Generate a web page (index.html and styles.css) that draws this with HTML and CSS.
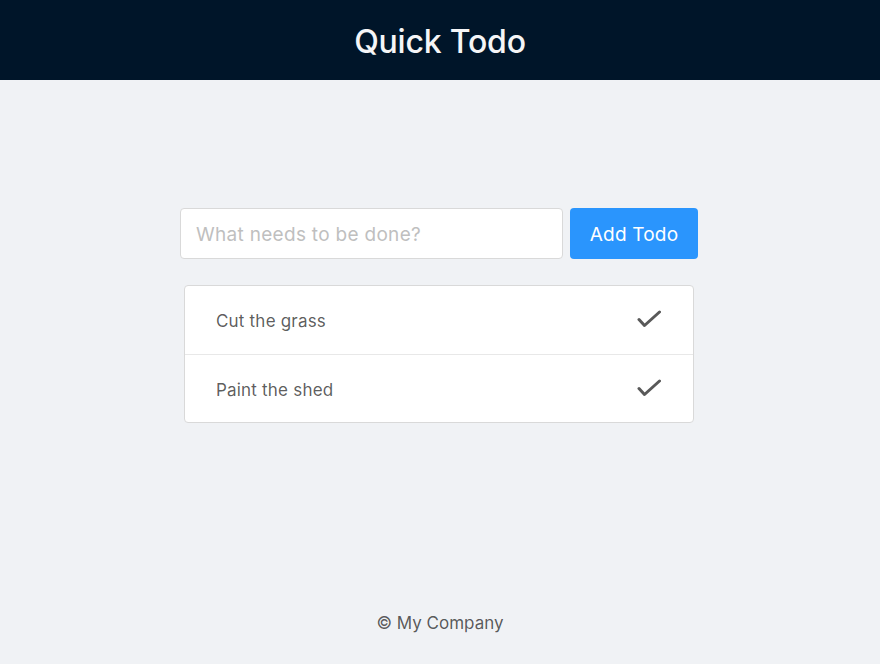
FILE: index.html
```html
<!DOCTYPE html>
<html>
<head>
<meta charset="utf-8">
<link rel="stylesheet" href="styles.css">
</head>
<body>
<div class="layout">
  <header class="header"><h1 class="title">Quick Todo</h1></header>
  <main class="content">
    <div class="add-row">
      <input class="todo-input" type="text" placeholder="What needs to be done?">
      <button class="add-btn">Add Todo</button>
    </div>
    <ul class="todo-list">
      <li class="todo-item">
        <span class="todo-text">Cut the grass</span>
        <svg class="check" width="24" height="20" viewBox="0 0 24 20"><path d="M2 10.5 L7.5 16.5 L22.5 3" fill="none" stroke="#595959" stroke-width="3" stroke-linecap="round" stroke-linejoin="round"/></svg>
      </li>
      <li class="todo-item">
        <span class="todo-text">Paint the shed</span>
        <svg class="check" width="24" height="20" viewBox="0 0 24 20"><path d="M2 10.5 L7.5 16.5 L22.5 3" fill="none" stroke="#595959" stroke-width="3" stroke-linecap="round" stroke-linejoin="round"/></svg>
      </li>
    </ul>
  </main>
  <footer class="footer">© My Company</footer>
</div>
</body>
</html>
```

FILE: styles.css
```css
* { box-sizing: border-box; }
html, body { margin: 0; padding: 0; }
body {
  background: #f0f2f5;
  font-family: Inter, "Liberation Sans", Arial, sans-serif;
  color: rgba(0,0,0,0.65);
}
.layout {
  min-height: 664px;
  display: flex;
  flex-direction: column;
}
.header {
  height: 80px;
  background: #001529;
  display: flex;
  align-items: center;
  justify-content: center;
}
.title {
  margin: 0;
  color: #f5f5f7;
  font-size: 32px;
  font-weight: 500;
  letter-spacing: -0.2px;
  padding-top: 2px;
}
.content {
  flex: 1;
  display: flex;
  flex-direction: column;
  align-items: center;
  padding-top: 128px;
}
.add-row {
  display: flex;
  gap: 7px;
  width: 518px;
  margin-left: -2px;
}
.todo-input {
  width: 383px;
  height: 51px;
  border: 1px solid #d9d9d9;
  border-radius: 4px;
  background: #fff;
  padding: 2px 15px 0;
  font-family: inherit;
  font-size: 19px;
  letter-spacing: 0.3px;
  color: rgba(0,0,0,0.65);
  outline: none;
}
.todo-input::placeholder { color: #bfbfbf; }
.add-btn {
  width: 128px;
  height: 51px;
  border: none;
  border-radius: 4px;
  background: #2a95fd;
  color: #fff;
  font-family: inherit;
  font-size: 19px;
  letter-spacing: 0.2px;
  padding: 2px 0 0;
}
.todo-list {
  list-style: none;
  margin: 26px 0 0 -2px;
  padding: 0;
  width: 510px;
  background: #fff;
  border: 1px solid #d9d9d9;
  border-radius: 4px;
}
.todo-item {
  height: 68px;
  display: flex;
  align-items: center;
  justify-content: space-between;
  padding: 0 32px 0 31px;
  font-size: 17px;
  letter-spacing: 0.2px;
}
.todo-item + .todo-item { border-top: 1px solid #e8e8e8; }
.todo-text { color: rgba(0,0,0,0.65); padding-top: 2px; }
.check { display: block; margin-top: -2px; }
.footer {
  text-align: center;
  font-size: 17px;
  padding: 32px 0 31px;
  color: rgba(0,0,0,0.65);
}
```
